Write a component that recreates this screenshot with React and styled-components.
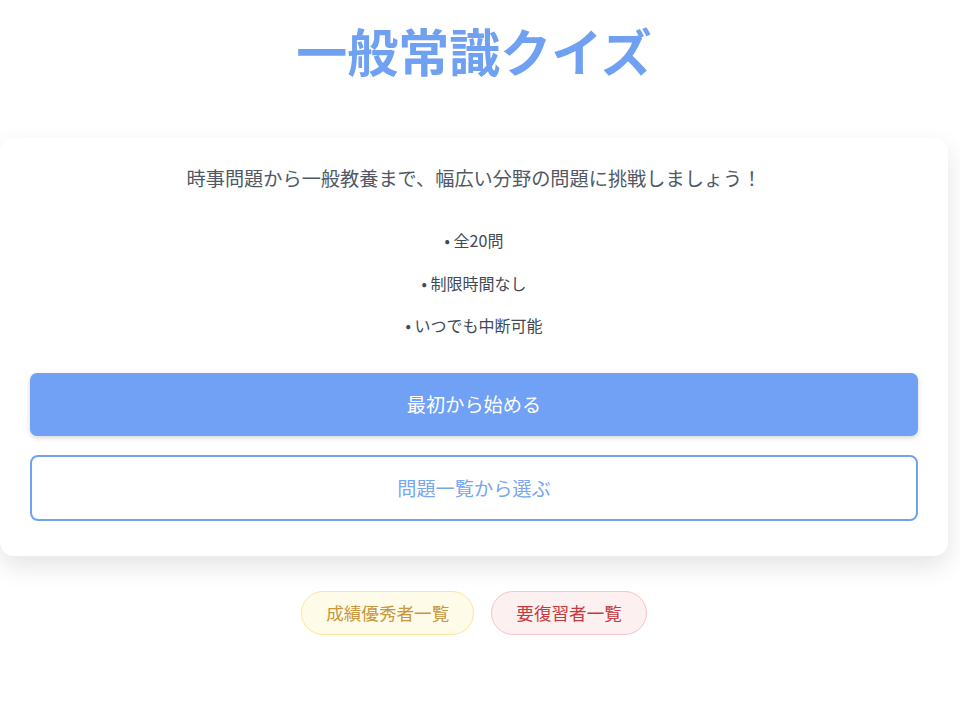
import React from "react";
import styled, { createGlobalStyle } from "styled-components";

const GlobalStyle = createGlobalStyle`
  html, body {
    margin: 0;
    padding: 0;
    background: #ffffff;
  }
  body {
    font-family: "Noto Sans CJK JP", "Noto Sans", sans-serif;
  }
`;

const Page = styled.div`
  width: 948px;
  display: flex;
  flex-direction: column;
  align-items: center;
`;

const Title = styled.h1`
  margin: 20px 0 0;
  font-size: 51px;
  line-height: 61px;
  font-weight: 700;
  color: #6fa0f1;
`;

const Card = styled.div`
  box-sizing: border-box;
  width: 100%;
  margin-top: 57px;
  padding: 26px 30px 35px;
  background: #ffffff;
  border-radius: 14px;
  box-shadow: 0 10px 26px rgba(0, 0, 0, 0.11);
  display: flex;
  flex-direction: column;
`;

const Intro = styled.p`
  margin: 0;
  text-align: center;
  font-size: 19.2px;
  line-height: 29px;
  color: #505866;
`;

const Rules = styled.ul`
  list-style: none;
  margin: 35px 0 36px;
  padding: 0;
  display: flex;
  flex-direction: column;
  gap: 18.5px;
`;

const Rule = styled.li`
  text-align: center;
  font-size: 16px;
  line-height: 24px;
  color: #424955;
`;

const Button = styled.button`
  box-sizing: border-box;
  width: 100%;
  font-family: inherit;
  font-size: 19.2px;
  cursor: pointer;
`;

const PrimaryButton = styled(Button)`
  padding: 17px 0;
  line-height: 29px;
  border: 0;
  border-radius: 7px;
  background: #70a1f5;
  color: #ffffff;
  box-shadow: 0 2px 5px rgba(0, 0, 0, 0.16);
`;

const OutlineButton = styled(Button)`
  margin-top: 19px;
  padding: 17px 0;
  line-height: 28px;
  border: 2px solid #70a1f5;
  border-radius: 8px;
  background: #ffffff;
  color: #78a6ef;
`;

const Links = styled.div`
  margin-top: 35px;
  display: flex;
  gap: 17px;
`;

const Pill = styled.button`
  padding: 8px 24px;
  font-family: inherit;
  font-size: 17.6px;
  line-height: 26px;
  border-radius: 999px;
  border: 1px solid ${(p) => (p.$tone === "gold" ? "#fbe6a0" : "#f4c5ca")};
  background: ${(p) => (p.$tone === "gold" ? "#fffbe9" : "#fdf0f0")};
  color: ${(p) => (p.$tone === "gold" ? "#c8963c" : "#c53a3e")};
  cursor: pointer;
`;

export default function App() {
  return (
    <>
      <GlobalStyle />
      <Page>
        <Title>一般常識クイズ</Title>
        <Card>
          <Intro>時事問題から一般教養まで、幅広い分野の問題に挑戦しましょう！</Intro>
          <Rules>
            <Rule>• 全20問</Rule>
            <Rule>• 制限時間なし</Rule>
            <Rule>• いつでも中断可能</Rule>
          </Rules>
          <PrimaryButton>最初から始める</PrimaryButton>
          <OutlineButton>問題一覧から選ぶ</OutlineButton>
        </Card>
        <Links>
          <Pill $tone="gold">成績優秀者一覧</Pill>
          <Pill $tone="red">要復習者一覧</Pill>
        </Links>
      </Page>
    </>
  );
}
